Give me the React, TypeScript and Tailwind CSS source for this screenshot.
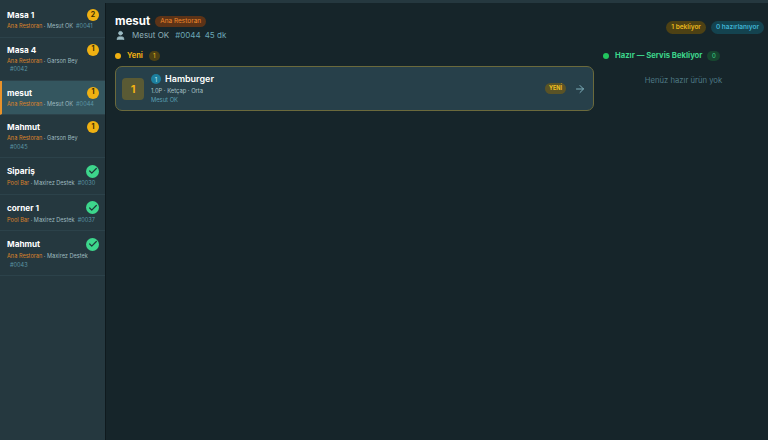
import { ArrowRight, Check, User } from "lucide-react";

interface Ticket {
  name: string;
  area: string;
  waiter: string;
  no: string;
  badge: string;
  active?: boolean;
}

const tickets: Ticket[] = [
  { name: "Masa 1", area: "Ana Restoran", waiter: "Mesut OK", no: "#0041", badge: "2" },
  { name: "Masa 4", area: "Ana Restoran", waiter: "Garson Bey", no: "#0042", badge: "1" },
  { name: "mesut", area: "Ana Restoran", waiter: "Mesut OK", no: "#0044", badge: "1", active: true },
  { name: "Mahmut", area: "Ana Restoran", waiter: "Garson Bey", no: "#0045", badge: "1" },
  { name: "Sipariş", area: "Pool Bar", waiter: "Maxirez Destek", no: "#0030", badge: "ok" },
  { name: "corner 1", area: "Pool Bar", waiter: "Maxirez Destek", no: "#0037", badge: "ok" },
  { name: "Mahmut", area: "Ana Restoran", waiter: "Maxirez Destek", no: "#0043", badge: "ok" },
];

function TicketRow({ t }: { t: Ticket }) {
  const done = t.badge === "ok";
  return (
    <div
      className={`border-b border-[#2c424a] pt-[6px] pb-[6px] pr-[6px] ${
        t.active ? "bg-[#34565f] border-l-2 border-l-[#e8922a] pl-[5px]" : "pl-[7px]"
      }`}
    >
      <div className={`flex items-center justify-between ${done ? "h-[14px]" : "h-[12px]"}`}>
        <div className="text-[8.2px] leading-[12px] font-bold text-white">{t.name}</div>
        {done ? (
          <div className="flex h-[13px] w-[13px] shrink-0 items-center justify-center rounded-full bg-[#3dd68c]">
            <Check size={10} strokeWidth={3} className="text-[#1f3a3a]" />
          </div>
        ) : (
          <div className="flex h-[12px] w-[12px] shrink-0 items-center justify-center rounded-full bg-[#f0b112] text-[7px] font-bold text-[#3a2c05]">
            {t.badge}
          </div>
        )}
      </div>
      <div className="mt-[1px] w-[91px] text-[5.6px] leading-[8.5px] text-[#9db8bf]">
        <span className="text-[#d9822b]">{t.area}</span> · {t.waiter}
        <span className="ml-[3px] inline-block text-[#5b95a5]">{t.no}</span>
      </div>
    </div>
  );
}

export default function App() {
  return (
    <div
      className="flex h-[440px] w-[768px] overflow-hidden border-t-[3px] border-[#25383f] bg-[#16252a] text-white"
      style={{ fontFamily: "Inter, sans-serif" }}
    >
      {/* Left list */}
      <div className="w-[106px] shrink-0 border-r border-[#0f1a1e] bg-[#25383f]">
        {tickets.map((t, i) => (
          <TicketRow key={i} t={t} />
        ))}
      </div>

      {/* Main */}
      <div className="flex-1 pl-[9px] pr-[4px] pt-[11px]">
        <div className="flex items-start justify-between">
          <div>
            <div className="flex items-center gap-[5px]">
              <span className="text-[11.5px] leading-[14px] font-bold">mesut</span>
              <span className="rounded-full bg-[#5c3317] px-[5px] py-[1px] text-[6.5px] leading-[9px] text-[#f08a2c]">
                Ana Restoran
              </span>
            </div>
            <div className="mt-[1px] flex items-center gap-[5px] text-[8px] leading-[12px] text-[#8fb0b8]">
              <User size={11} className="mr-[1px] text-[#9dbcc4]" fill="currentColor" />
              <span>Mesut OK</span>
              <span className="ml-[1px] text-[#6aa5b5]">#0044</span>
              <span className="ml-[-1px] text-[#6aa5b5]">45 dk</span>
            </div>
          </div>
          <div className="mt-[7px] flex gap-[5px]">
            <span className="rounded-full bg-[#4d4114] px-[5px] py-[2px] text-[6.5px] leading-[9px] font-semibold text-[#e8b71c]">
              1 bekliyor
            </span>
            <span className="rounded-full bg-[#14434f] px-[5px] py-[2px] text-[6.5px] leading-[9px] font-semibold text-[#3fb3d4]">
              0 hazırlanıyor
            </span>
          </div>
        </div>

        <div className="mt-[9px] flex gap-[9px]">
          {/* Yeni column */}
          <div className="w-[479px] shrink-0">
            <div className="flex items-center gap-[5px]">
              <span className="h-[6px] w-[6px] rounded-full bg-[#f0b112]" />
              <span className="ml-[1px] text-[7.5px] font-bold text-[#f0b112]">Yeni</span>
              <span className="ml-[1px] flex h-[10px] w-[11px] items-center justify-center rounded-full bg-[#4d4114] text-[6px] text-[#e8b71c]">
                1
              </span>
            </div>
            <div className="mt-[5px] flex h-[45px] items-center rounded-[7px] border border-[#6b6a3c] bg-[#27404a] pl-[6px] pr-[7px]">
              <div className="flex h-[22px] w-[22px] items-center justify-center rounded-[4px] bg-[#5a5a34] text-[11px] font-bold text-[#f0b112]">
                1
              </div>
              <div className="ml-[7px] flex-1">
                <div className="flex items-center gap-[4px]">
                  <span className="flex h-[10px] w-[10px] items-center justify-center rounded-full bg-[#1d7f9e] text-[6px] text-[#bfeaf5]">
                    1
                  </span>
                  <span className="text-[9px] leading-[12px] font-semibold">Hamburger</span>
                </div>
                <div className="mt-[2px] text-[5.8px] leading-[8px] text-[#a9c2c8]">1.0P · Ketçap · Orta</div>
                <div className="text-[5.8px] leading-[9px] text-[#5b9fb2]">Mesut OK</div>
              </div>
              <span className="rounded-full bg-[#5a5326] px-[4px] py-[1px] text-[5.5px] leading-[9px] font-bold text-[#f0c020]">
                YENİ
              </span>
              <ArrowRight size={12} className="ml-[8px] text-[#7fb0bc]" />
            </div>
          </div>

          {/* Hazir column */}
          <div className="flex-1">
            <div className="flex items-center gap-[5px]">
              <span className="h-[6px] w-[6px] rounded-full bg-[#22c55e]" />
              <span className="ml-[1px] text-[7.7px] font-bold text-[#3dd68c]">Hazır — Servis Bekliyor</span>
              <span className="flex h-[10px] w-[13px] items-center justify-center rounded-full bg-[#17452f] text-[6px] text-[#3dd68c]">
                0
              </span>
            </div>
            <div className="mt-[13px] text-center text-[7.7px] leading-[11px] text-[#4f7a85]">
              Henüz hazır ürün yok
            </div>
          </div>
        </div>
      </div>
    </div>
  );
}
